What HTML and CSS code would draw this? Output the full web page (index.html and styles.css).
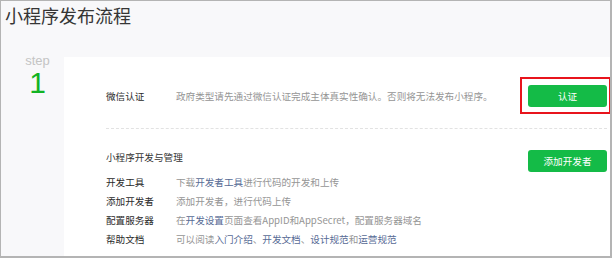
FILE: index.html
```html
<!DOCTYPE html>
<html lang="zh-CN">
<head>
  <meta charset="UTF-8" />
  <title>小程序发布流程</title>
  <link rel="stylesheet" href="styles.css">
</head>
<body>
  <div class="frame">
    <h1 class="page-title">小程序发布流程</h1>

    <div class="step-row">
      <div class="step-index">
        <div class="step-label">step</div>
        <div class="step-num">1</div>
      </div>

      <div class="step-card">
        <!-- 微信认证 -->
        <div class="section section-verify">
          <div class="item-label">微信认证</div>
          <div class="item-desc">政府类型请先通过微信认证完成主体真实性确认。否则将无法发布小程序。</div>
          <div class="btn-wrap highlighted">
            <a class="btn" href="#">认证</a>
          </div>
        </div>

        <!-- 开发与管理 -->
        <div class="section section-dev">
          <div class="section-head">
            <div class="section-title">小程序开发与管理</div>
            <a class="btn" href="#">添加开发者</a>
          </div>
          <ul class="item-list">
            <li><span class="item-label">开发工具</span><span class="item-desc">下载<a href="#">开发者工具</a>进行代码的开发和上传</span></li>
            <li><span class="item-label">添加开发者</span><span class="item-desc">添加开发者，进行代码上传</span></li>
            <li><span class="item-label">配置服务器</span><span class="item-desc">在<a href="#">开发设置</a>页面查看AppID和AppSecret，配置服务器域名</span></li>
            <li><span class="item-label">帮助文档</span><span class="item-desc">可以阅读<a href="#">入门介绍</a>、<a href="#">开发文档</a>、<a href="#">设计规范</a>和<a href="#">运营规范</a></span></li>
          </ul>
        </div>
      </div>
    </div>
  </div>
</body>
</html>
```

FILE: styles.css
```css
body {
  margin: 0;
  font-family: "Liberation Sans", "Noto Sans CJK SC", sans-serif;
  background-color: #fff;
}
/* outer crop frame */
.frame {
  width: 612px;
  height: 258px;
  box-sizing: border-box;
  border: 1px solid #b4b4b4;
  border-right-width: 2px;
  border-bottom-width: 2px;
  background-color: #f8f8fa;
  overflow: hidden;
}
.page-title {
  margin: 0;
  height: 54px;
  box-sizing: border-box;
  padding: 2px 4px 0;
  font-size: 18px;
  line-height: 25px;
  font-weight: normal;
  color: #353535;
  font-family: "Noto Sans CJK SC", sans-serif;
}
.step-row {
  display: flex;
  height: 201px;
}
.step-index {
  width: 63px;
  padding-left: 10px;
  box-sizing: border-box;
  text-align: center;
}
.step-label {
  font-size: 13px;
  line-height: 12px;
  color: #c4c4c4;
}
.step-num {
  margin-top: 1px;
  font-size: 30px;
  line-height: 30px;
  color: #12b324;
}
.step-card {
  flex: 1;
  margin-top: 2px;
  background: #fff;
  padding: 0 3px 0 42px;
  font-family: "Noto Sans CJK SC", sans-serif;
  font-size: 9.6px;
}
.section-verify {
  display: flex;
  align-items: center;
  padding: 28px 0 21px;
  border-bottom: 1px dashed #e2e2e2;
}
.item-label {
  display: inline-block;
  width: 70px;
  flex-shrink: 0;
  color: #2a2a2a;
}
.item-desc {
  color: #959595;
}
.item-desc a {
  color: #576b95;
  text-decoration: none;
}
.btn {
  display: block;
  width: 79px;
  height: 22px;
  line-height: 22px;
  text-align: center;
  color: #fff;
  background: #14bb47;
  border-radius: 3px;
  text-decoration: none;
  font-size: 9.6px;
}
.btn-wrap {
  margin-left: auto;
  position: relative;
}
/* red annotation box over the button */
.highlighted::after {
  content: "";
  position: absolute;
  top: -8px;
  left: -8px;
  right: -4px;
  bottom: -7px;
  border: 2px solid #e8141c;
}
.section-dev {
  padding-top: 21px;
}
.section-head {
  display: flex;
  justify-content: space-between;
  align-items: flex-start;
}
.section-title {
  line-height: 14px;
  color: #353535;
}
.item-list {
  list-style: none;
  margin: 1px 0 0;
  padding: 0;
}
.item-list li {
  line-height: 19px;
}
```
